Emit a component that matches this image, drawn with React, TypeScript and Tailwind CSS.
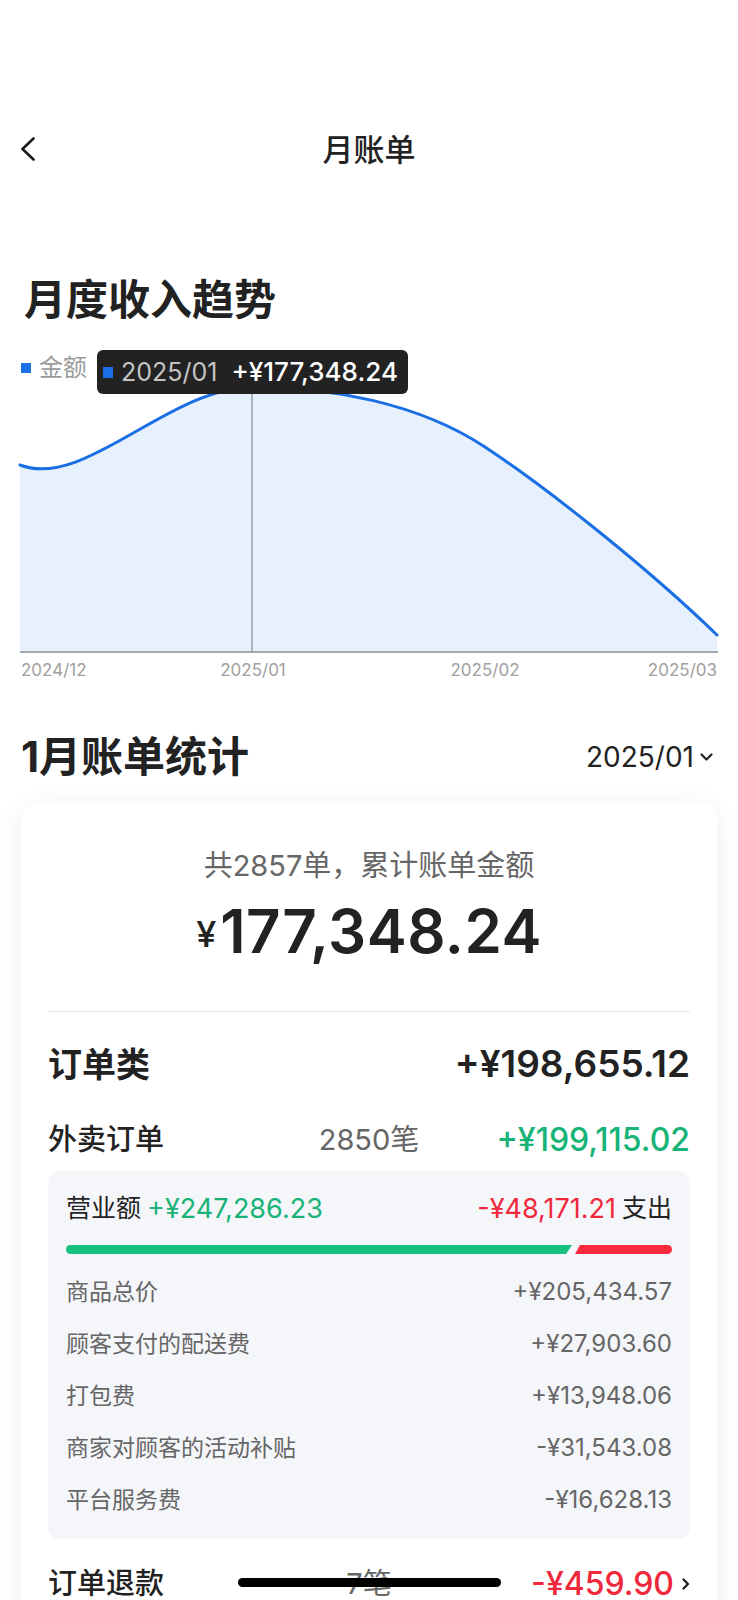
// 月账单 screen: income trend chart + monthly statement card.
const FONT = "font-['Inter','Noto_Sans_CJK_SC',sans-serif]";

const DETAILS: [string, string][] = [
  ["商品总价", "+¥205,434.57"],
  ["顾客支付的配送费", "+¥27,903.60"],
  ["打包费", "+¥13,948.06"],
  ["商家对顾客的活动补贴", "-¥31,543.08"],
  ["平台服务费", "-¥16,628.13"],
];

// chart drawn in page coordinates (viewBox starts at y=340)
const CURVE =
  "M20 465 C85 490 170 386 252 388 C330 386 420 404 485 447 C550 490 650 570 717 635";

function TrendChart() {
  return (
    <div className="relative h-[350px]">
      <svg width="738" height="350" viewBox="0 340 738 350" className="block">
        <path d={`${CURVE} L717 652 L20 652 Z`} fill="#e7f0fd" />
        <line x1="252" y1="394" x2="252" y2="652" stroke="#9aa0a6" strokeWidth="1.5" />
        <path d={CURVE} fill="none" stroke="#1b6fe4" strokeWidth="3" strokeLinecap="round" />
        <line x1="20" y1="652" x2="718" y2="652" stroke="#a3a7ab" strokeWidth="2" />
        <g fill="#a0a0a0" fontSize="17" fontFamily="Inter, sans-serif">
          <text x="21" y="676">2024/12</text>
          <text x="253" y="676" textAnchor="middle">2025/01</text>
          <text x="485" y="676" textAnchor="middle">2025/02</text>
          <text x="717" y="676" textAnchor="end">2025/03</text>
        </g>
      </svg>

      <div className="absolute left-[21px] top-[14px] flex items-center gap-[8px]">
        <span className="h-[10px] w-[10px] bg-[#1b6fe4]" />
        <span className="text-[24px] leading-[28px] text-[#9a9a9a]">金额</span>
      </div>

      <div className="absolute left-[97px] top-[10px] flex h-[44px] w-[311px] items-center rounded-[6px] bg-[#222222] pl-[6px]">
        <span className="h-[11px] w-[10px] bg-[#1b6fe4]" />
        <span className="ml-[8px] text-[25px] leading-none text-[#c4c4c4]">2025/01</span>
        <span className="ml-[14px] text-[26px] font-medium leading-none text-white">+¥177,348.24</span>
      </div>
    </div>
  );
}

function SplitBar() {
  return (
    <svg width="606" height="9" viewBox="0 0 606 9" className="mt-[19px] block">
      <path d="M4.5 0 H506 L500 9 H4.5 A4.5 4.5 0 0 1 4.5 0 Z" fill="#17c07f" />
      <path d="M514 0 H601.5 A4.5 4.5 0 0 1 601.5 9 H509 Z" fill="#fb2b3e" />
    </svg>
  );
}

export default function App() {
  return (
    <div className={`relative h-[1600px] w-[738px] overflow-hidden bg-white text-[#222] ${FONT}`}>
      {/* nav bar */}
      <header className="mt-[118px] flex h-[62px] items-center px-[21px]">
        <svg width="14" height="24" viewBox="0 0 14 24" className="shrink-0">
          <path d="M12.5 1.5 L1.5 12 L12.5 22.5" fill="none" stroke="#1a1a1a" strokeWidth="2.6" strokeLinecap="round" strokeLinejoin="round" />
        </svg>
        <h1 className="flex-1 pr-[14px] text-center text-[31px] font-medium leading-none">月账单</h1>
      </header>

      <h2 className="mt-[96px] px-[24px] text-[42px] font-bold leading-[48px]">月度收入趋势</h2>

      <div className="mt-[16px]">
        <TrendChart />
      </div>

      <div className="mt-[43px] flex items-center justify-between pl-[21px] pr-[25px]">
        <h2 className="text-[42px] font-bold leading-[48px]">1月账单统计</h2>
        <div className="flex items-center gap-[6px]">
          <span className="text-[28px] leading-none">2025/01</span>
          <svg width="13" height="8" viewBox="0 0 13 8">
            <path d="M1.5 1.5 L6.5 6.5 L11.5 1.5" fill="none" stroke="#222" strokeWidth="2.2" strokeLinecap="round" strokeLinejoin="round" />
          </svg>
        </div>
      </div>

      {/* statement card */}
      <section className="mx-[21px] mt-[22px] rounded-[16px] bg-white pb-[40px] pt-[43px] shadow-[0_4px_26px_rgba(0,0,0,0.07)]">
        <p className="text-center text-[29px] leading-[40px] text-[#666]">共2857单，累计账单金额</p>
        <div className="mt-[10px] flex h-[70px] items-center justify-center">
          <span className="mr-[4px] mt-[6px] text-[36px] font-medium">¥</span>
          <span className="text-[60px] font-semibold tracking-[0.5px]">177,348.24</span>
        </div>

        <div className="mx-[27px] mt-[45px] h-px bg-[#e8e8e8]" />

        <div className="mx-[27px]">
          <div className="mt-[30px] flex h-[44px] items-center justify-between">
            <span className="text-[34px] font-semibold">订单类</span>
            <span className="text-[37px] font-semibold">+¥198,655.12</span>
          </div>

          <div className="mt-[30px] grid h-[40px] grid-cols-[1fr_auto_1fr] items-center">
            <span className="text-[29px] font-medium">外卖订单</span>
            <span className="text-[29px] text-[#666]">2850笔</span>
            <span className="justify-self-end text-[32px] font-medium text-[#17b377]">+¥199,115.02</span>
          </div>

          <div className="mt-[15px] rounded-[12px] bg-[#f5f6fa] px-[18px] pb-[13px] pt-[21px]">
            <div className="flex h-[34px] items-center justify-between text-[25px]">
              <div className="flex items-center gap-[6px]">
                <span>营业额</span>
                <span className="text-[27px] text-[#17b377]">+¥247,286.23</span>
              </div>
              <div className="flex items-center gap-[6px]">
                <span className="text-[27px] text-[#f0283c]">-¥48,171.21</span>
                <span>支出</span>
              </div>
            </div>
            <SplitBar />
            <div className="mt-[12px]">
              {DETAILS.map(([label, value]) => (
                <div key={label} className="flex h-[52px] items-center justify-between text-[23px] text-[#666]">
                  <span>{label}</span>
                  <span className="text-[24px]">{value}</span>
                </div>
              ))}
            </div>
          </div>

          <div className="mt-[21px] grid h-[40px] grid-cols-[1fr_auto_1fr] items-center">
            <span className="text-[29px] font-medium">订单退款</span>
            <span className="text-[29px] text-[#666]">7笔</span>
            <div className="flex items-center justify-self-end gap-[8px]">
              <span className="text-[32px] font-medium text-[#f0283c]">-¥459.90</span>
              <svg width="8" height="12" viewBox="0 0 8 12">
                <path d="M1.5 1.5 L6 6 L1.5 10.5" fill="none" stroke="#222" strokeWidth="2.4" strokeLinecap="round" strokeLinejoin="round" />
              </svg>
            </div>
          </div>
        </div>
      </section>

      {/* home indicator */}
      <div className="absolute left-[238px] top-[1578px] h-[9px] w-[263px] rounded-full bg-black" />
    </div>
  );
}
